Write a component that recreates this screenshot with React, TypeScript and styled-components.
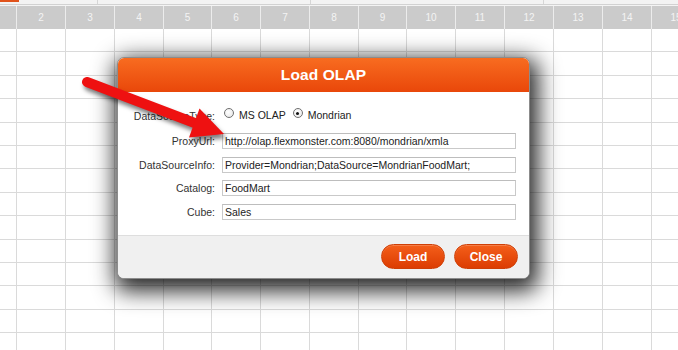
import React from "react";
import styled, { createGlobalStyle } from "styled-components";

const Global = createGlobalStyle`
  html, body { margin: 0; padding: 0; background: #fff; overflow: hidden; }
  body { font-family: "Liberation Sans", Arial, sans-serif; }
  * { box-sizing: border-box; }
`;

const Page = styled.div`
  position: relative;
  width: 678px;
  height: 350px;
  overflow: hidden;
  background: #fff;
`;

const TopStrip = styled.div`
  position: relative;
  display: flex;
  height: 5px;
  background: #f3f3f3;
  border-bottom: 1px solid #d2d2d2;
`;

const StripSeg = styled.div<{ $w: number }>`
  flex: 0 0 ${(p) => p.$w}px;
  border-right: 1px solid #d6d6d6;
`;

const OrangeMark = styled.div`
  position: absolute;
  left: 0;
  top: 0;
  width: 19px;
  height: 2px;
  background: #e0531c;
`;

const COLS = "17px 49px 49px 49px 48px 49px 49px 49px 48px 49px 49px 49px 49px 49px 49px";

const HeaderRow = styled.div`
  display: grid;
  grid-template-columns: ${COLS};
  height: 24px;
  border-top: 1px solid #f4f4f4;
  background: #cbcbcb;
`;

const HeadCell = styled.div`
  border-right: 1px solid #ececec;
  color: #f4f4f4;
  font-size: 10px;
  display: flex;
  align-items: center;
  justify-content: center;
`;

const GridRow = styled.div`
  display: grid;
  grid-template-columns: ${COLS};
  height: 23.42px;
  border-bottom: 1px solid #dadada;
`;

const Cell = styled.div`
  border-right: 1px solid #dadada;
`;

const Dialog = styled.div`
  position: absolute;
  left: 117px;
  top: 57px;
  width: 413px;
  border: 1px solid #8c8c8c;
  border-radius: 7px;
  overflow: hidden;
  background: #fff;
  box-shadow: 3px 7px 22px 5px rgba(0, 0, 0, 0.85);
`;

const DialogHeader = styled.div`
  height: 34px;
  background: linear-gradient(#f86c20, #e9470a);
  display: flex;
  align-items: center;
  justify-content: center;
  color: #fff;
  font-weight: bold;
  font-size: 15.5px;
  letter-spacing: 0.1px;
`;

const Body = styled.div`
  display: grid;
  grid-template-columns: 97px 294px;
  column-gap: 7px;
  row-gap: 7.5px;
  padding: 15px 13px 15.5px 0;
  align-items: center;
`;

const Label = styled.div`
  text-align: right;
  font-size: 10.5px;
  color: #333;
  line-height: 16px;
`;

const RadioGroup = styled.div`
  display: flex;
  align-items: center;
  height: 16px;
  padding-left: 2px;
  margin-bottom: 2.5px;
  font-size: 10.5px;
  color: #222;
`;

const RadioItem = styled.label`
  display: flex;
  align-items: center;
  margin-right: 7px;
`;

const RadioCircle = styled.span<{ $checked?: boolean }>`
  position: relative;
  display: inline-block;
  width: 10px;
  height: 10px;
  margin-top: -4px;
  margin-right: 5px;
  border-radius: 50%;
  border: 1px solid #6f6f6f;
  background: radial-gradient(circle at 40% 40%, #fff, #e4e4e4);
  &::after {
    content: "";
    display: ${(p) => (p.$checked ? "block" : "none")};
    position: absolute;
    left: 2.5px;
    top: 2.5px;
    width: 3px;
    height: 3px;
    border-radius: 50%;
    background: #111;
  }
`;

const Field = styled.div`
  height: 16px;
  border: 1px solid #c9c9c9;
  border-top-color: #bdbdbd;
  background: #fff;
  font-size: 10.5px;
  color: #222;
  line-height: 14px;
  padding-left: 2px;
  white-space: nowrap;
  overflow: hidden;
`;

const Footer = styled.div`
  height: 43px;
  border-top: 1px solid #dedede;
  background: #f0f0f0;
  display: flex;
  justify-content: flex-end;
  align-items: center;
  gap: 9px;
  padding: 0 11px 1px 0;
`;

const Button = styled.button`
  width: 64px;
  height: 25px;
  border-radius: 13px;
  border: 1px solid #cf3f06;
  background: linear-gradient(#f45f1a, #dc3c02);
  color: #fff;
  font-family: "Liberation Sans", Arial, sans-serif;
  font-weight: bold;
  font-size: 12px;
  padding: 0;
  box-shadow: inset 0 1px 0 rgba(255, 255, 255, 0.2);
`;

const ArrowLayer = styled.svg`
  position: absolute;
  left: 0;
  top: 0;
  pointer-events: none;
  filter: drop-shadow(2px 4px 2px rgba(0, 0, 0, 0.5));
`;

const colNums = ["", "2", "3", "4", "5", "6", "7", "8", "9", "10", "11", "12", "13", "14", "15"];

export default function App() {
  return (
    <Page>
      <Global />
      <TopStrip>
        <OrangeMark />
        <StripSeg $w={98} />
        <StripSeg $w={213} />
        <StripSeg $w={233} />
      </TopStrip>
      <HeaderRow>
        {colNums.map((n, i) => (
          <HeadCell key={i}>{n}</HeadCell>
        ))}
      </HeaderRow>
      {Array.from({ length: 14 }).map((_, r) => (
        <GridRow key={r}>
          {colNums.map((_, c) => (
            <Cell key={c} />
          ))}
        </GridRow>
      ))}

      <Dialog>
        <DialogHeader>Load OLAP</DialogHeader>
        <Body>
          <Label>DataSourceType:</Label>
          <RadioGroup>
            <RadioItem>
              <RadioCircle />
              MS OLAP
            </RadioItem>
            <RadioItem>
              <RadioCircle $checked />
              Mondrian
            </RadioItem>
          </RadioGroup>
          <Label>ProxyUrl:</Label>
          <Field>http://olap.flexmonster.com:8080/mondrian/xmla</Field>
          <Label>DataSourceInfo:</Label>
          <Field>Provider=Mondrian;DataSource=MondrianFoodMart;</Field>
          <Label>Catalog:</Label>
          <Field>FoodMart</Field>
          <Label>Cube:</Label>
          <Field>Sales</Field>
        </Body>
        <Footer>
          <Button>Load</Button>
          <Button>Close</Button>
        </Footer>
      </Dialog>

      <ArrowLayer width={678} height={350} viewBox="0 0 678 350">
        <line x1={87} y1={82} x2={196} y2={123.5} stroke="#ee1111" strokeWidth={10} strokeLinecap="round" />
        <polygon points="224,134 189,137.5 199.5,108.5" fill="#ee1111" />
      </ArrowLayer>
    </Page>
  );
}
